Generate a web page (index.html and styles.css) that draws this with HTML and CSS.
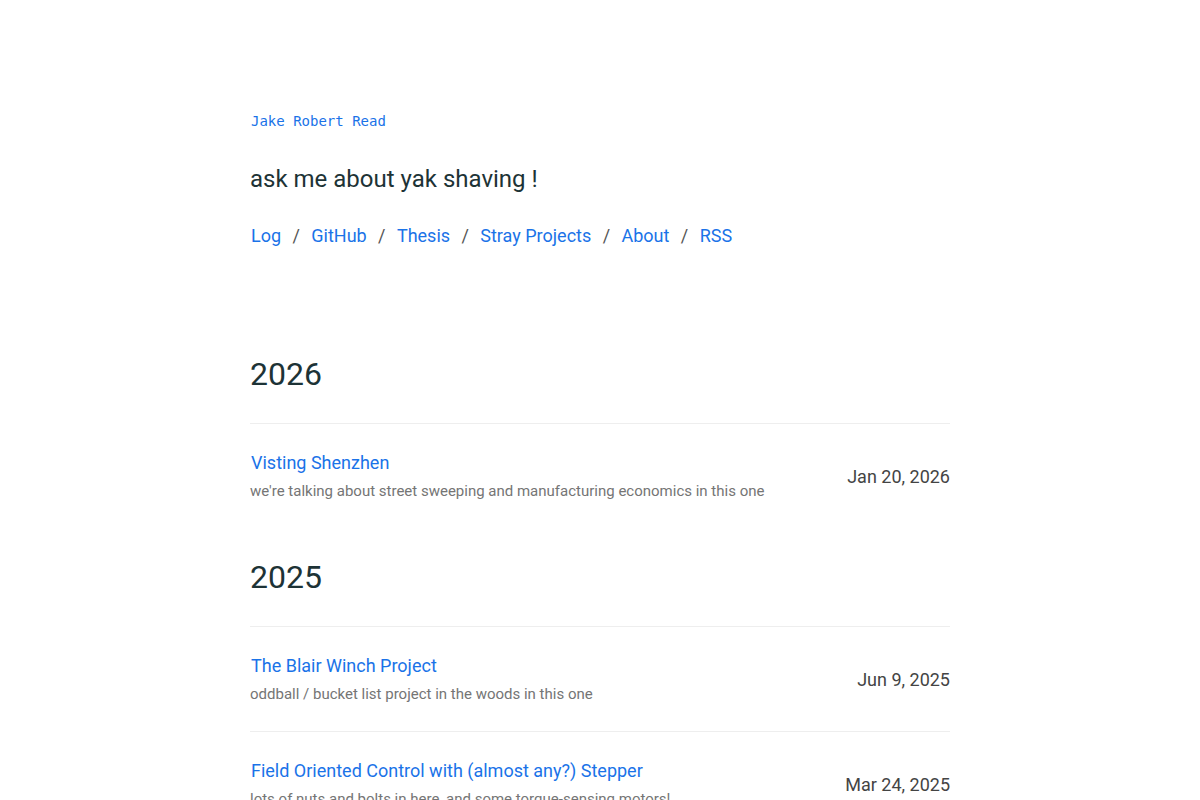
FILE: index.html
```html
<!DOCTYPE html>
<html lang="en">
<head>
<meta charset="utf-8">
<title>Jake Robert Read</title>
<link rel="stylesheet" href="styles.css">
</head>
<body>
<div class="page">
  <header class="header">
    <a class="name" href="#">Jake Robert Read</a>
    <p class="tagline">ask me about yak shaving !</p>
    <nav class="nav">
      <a href="#">Log</a><span class="sep">/</span>
      <a href="#">GitHub</a><span class="sep">/</span>
      <a href="#">Thesis</a><span class="sep">/</span>
      <a href="#">Stray Projects</a><span class="sep">/</span>
      <a href="#">About</a><span class="sep">/</span>
      <a href="#">RSS</a>
    </nav>
  </header>

  <section class="year">
    <h2 class="year-title">2026</h2>
    <div class="entry">
      <div class="entry-text">
        <a class="entry-title" href="#">Visting Shenzhen</a>
        <p class="entry-desc">we're talking about street sweeping and manufacturing economics in this one</p>
      </div>
      <div class="entry-date">Jan 20, 2026</div>
    </div>
  </section>

  <section class="year">
    <h2 class="year-title">2025</h2>
    <div class="entry">
      <div class="entry-text">
        <a class="entry-title" href="#">The Blair Winch Project</a>
        <p class="entry-desc">oddball / bucket list project in the woods in this one</p>
      </div>
      <div class="entry-date">Jun 9, 2025</div>
    </div>
    <div class="entry">
      <div class="entry-text">
        <a class="entry-title" href="#">Field Oriented Control with (almost any?) Stepper</a>
        <p class="entry-desc">lots of nuts and bolts in here, and some torque-sensing motors!</p>
      </div>
      <div class="entry-date">Mar 24, 2025</div>
    </div>
  </section>
</div>
</body>
</html>
```

FILE: styles.css
```css
html, body {
  margin: 0;
  padding: 0;
  background: #ffffff;
}

body {
  font-family: Roboto, "Liberation Sans", Arial, sans-serif;
  color: #1d3336;
}

a {
  color: #1a73e8;
  text-decoration: none;
}

.page {
  width: 700px;
  margin: 0 auto;
  padding-top: 111px;
}

.header {
  display: flex;
  flex-direction: column;
  align-items: flex-start;
}

.name {
  font-family: "DejaVu Sans Mono", "Liberation Mono", monospace;
  font-size: 14px;
  line-height: 21px;
  padding-left: 1px;
}

.tagline {
  margin: 32px 0 0;
  font-size: 24px;
  line-height: 31px;
  color: #1d3336;
}

.nav {
  margin-top: 27px;
  display: flex;
  align-items: baseline;
  gap: 11.4px;
  font-size: 18px;
  line-height: 27px;
  padding-left: 1px;
}

.sep {
  color: #555;
}

.year {
  margin-top: 106px;
}

.year + .year {
  margin-top: 30px;
}

.year-title {
  margin: 0 0 30px;
  font-size: 32px;
  font-weight: 400;
  line-height: 38px;
  color: #1d3336;
}

.entry {
  display: flex;
  align-items: center;
  justify-content: space-between;
  border-top: 1px solid #eeeeee;
  padding: 25px 0 26px;
}

.entry-text {
  display: flex;
  flex-direction: column;
  align-items: flex-start;
}

.entry-title {
  font-size: 18px;
  line-height: 27px;
  padding-left: 1px;
}

.entry-desc {
  margin: 4px 0 0;
  font-size: 15px;
  line-height: 22px;
  color: #757575;
}

.entry-date {
  font-size: 18px;
  line-height: 27px;
  color: #444;
  padding-top: 2px;
}
```
